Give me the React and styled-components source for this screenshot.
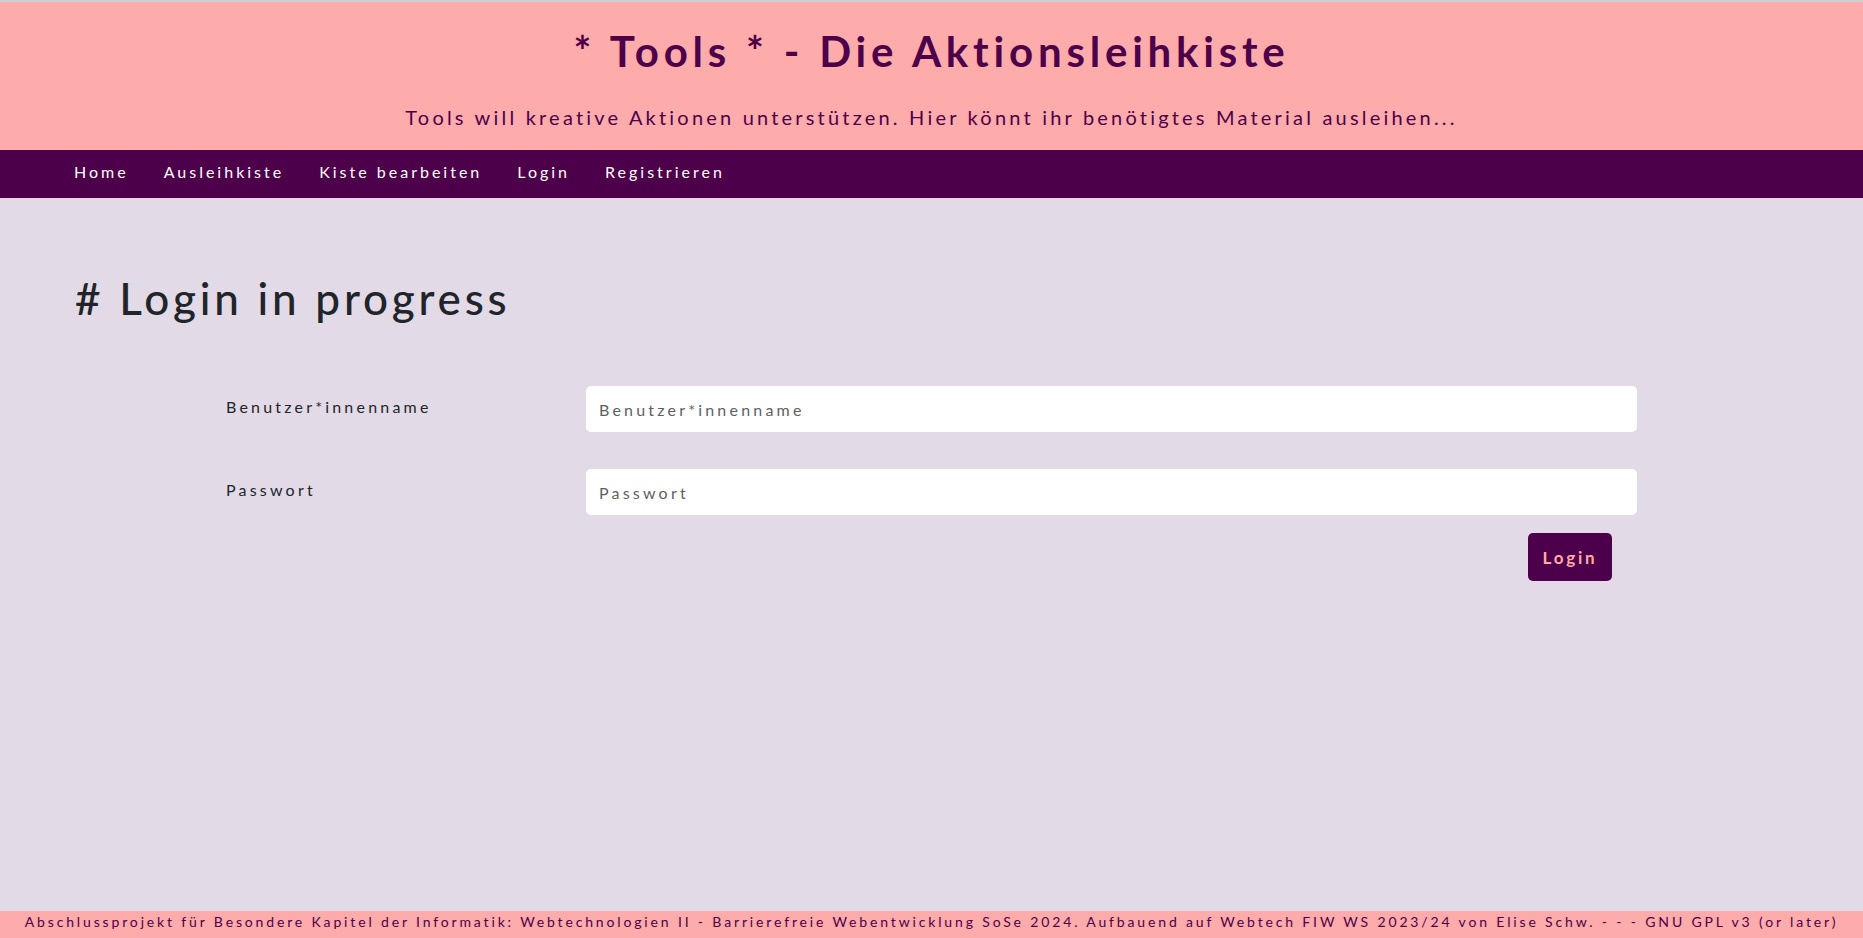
import React from 'react';
import styled, { createGlobalStyle } from 'styled-components';

const GlobalStyle = createGlobalStyle`
  html, body {
    margin: 0;
    padding: 0;
  }
  body {
    font-family: Lato, "Open Sans", sans-serif;
    background: #e2dae7;
    color: #212529;
  }
  * {
    box-sizing: border-box;
  }
`;

let Page = styled.div`
  min-height: 100vh;
  display: flex;
  flex-direction: column;
  border-top: 2px solid #cfcfcf;
`;

let Header = styled.header`
  background: #feabab;
  color: #4d0049;
  text-align: center;
  padding: 20px 0 18px;
`;

let Title = styled.h1`
  margin: 0;
  font-size: 42px;
  font-weight: 700;
  letter-spacing: 4.8px;
  line-height: 58px;
`;

let Lead = styled.p`
  margin: 22px 0 0;
  font-size: 20px;
  letter-spacing: 3.2px;
  line-height: 30px;
`;

let NavBar = styled.nav`
  background: #4d0049;
  height: 48px;
  display: flex;
  align-items: center;
  gap: 35px;
  padding: 0 74px 6px;
`;

let NavLink = styled.a`
  color: #fff;
  font-size: 16px;
  letter-spacing: 3px;
  text-decoration: none;
`;

let Main = styled.main`
  flex: 1;
  padding: 70px 75px 40px;
`;

let Heading = styled.h2`
  margin: 0 0 58px;
  font-size: 44px;
  font-weight: 500;
  letter-spacing: 3.8px;
  line-height: 60px;
`;

let Form = styled.form`
  width: 1436px;
  margin-left: 151px;
  display: flex;
  flex-direction: column;
  gap: 37px;
`;

let FormRow = styled.div`
  display: grid;
  grid-template-columns: 360px 1051px;
  align-items: start;
`;

let Label = styled.label`
  font-size: 16px;
  letter-spacing: 3.2px;
  padding-top: 11px;
`;

let Input = styled.input`
  height: 46px;
  border: none;
  border-radius: 5px;
  background: #fff;
  padding: 0 13px;
  font-family: Lato, "Open Sans", sans-serif;
  font-size: 16px;
  letter-spacing: 3.2px;
  &::placeholder {
    color: #5d5f63;
  }
`;

let ButtonRow = styled.div`
  display: flex;
  justify-content: flex-end;
  width: 1386px;
  margin-top: -19px;
`;

let Button = styled.button`
  width: 84px;
  height: 48px;
  border: none;
  border-radius: 5px;
  background: #4d0049;
  color: #feabab;
  font-family: Lato, "Open Sans", sans-serif;
  font-size: 17px;
  font-weight: 700;
  letter-spacing: 2.8px;
  padding: 0;
`;

let Footer = styled.footer`
  background: #feabab;
  color: #4d0049;
  height: 27px;
  display: flex;
  align-items: center;
  justify-content: center;
  padding-bottom: 6px;
  font-size: 14px;
  letter-spacing: 2.85px;
  white-space: nowrap;
`;

export default function App() {
  let links = ['Home', 'Ausleihkiste', 'Kiste bearbeiten', 'Login', 'Registrieren'];

  return (
    <Page>
      <GlobalStyle />
      <Header>
        <Title>* Tools * - Die Aktionsleihkiste</Title>
        <Lead>Tools will kreative Aktionen unterstützen. Hier könnt ihr benötigtes Material ausleihen...</Lead>
      </Header>
      <NavBar>
        {links.map((item, i) => {
          return (
            <NavLink key={i} href="#">
              {item}
            </NavLink>
          );
        })}
      </NavBar>
      <Main>
        <Heading># Login in progress</Heading>
        <Form onSubmit={(e) => e.preventDefault()}>
          <FormRow>
            <Label htmlFor="user">Benutzer*innenname</Label>
            <Input id="user" type="text" placeholder="Benutzer*innenname" />
          </FormRow>
          <FormRow>
            <Label htmlFor="pw">Passwort</Label>
            <Input id="pw" type="password" placeholder="Passwort" />
          </FormRow>
          <ButtonRow>
            <Button type="submit">Login</Button>
          </ButtonRow>
        </Form>
      </Main>
      <Footer>
        Abschlussprojekt für Besondere Kapitel der Informatik: Webtechnologien II - Barrierefreie Webentwicklung SoSe 2024. Aufbauend auf Webtech FIW WS 2023/24 von Elise Schw. - - - GNU GPL v3 (or later)
      </Footer>
    </Page>
  );
}
